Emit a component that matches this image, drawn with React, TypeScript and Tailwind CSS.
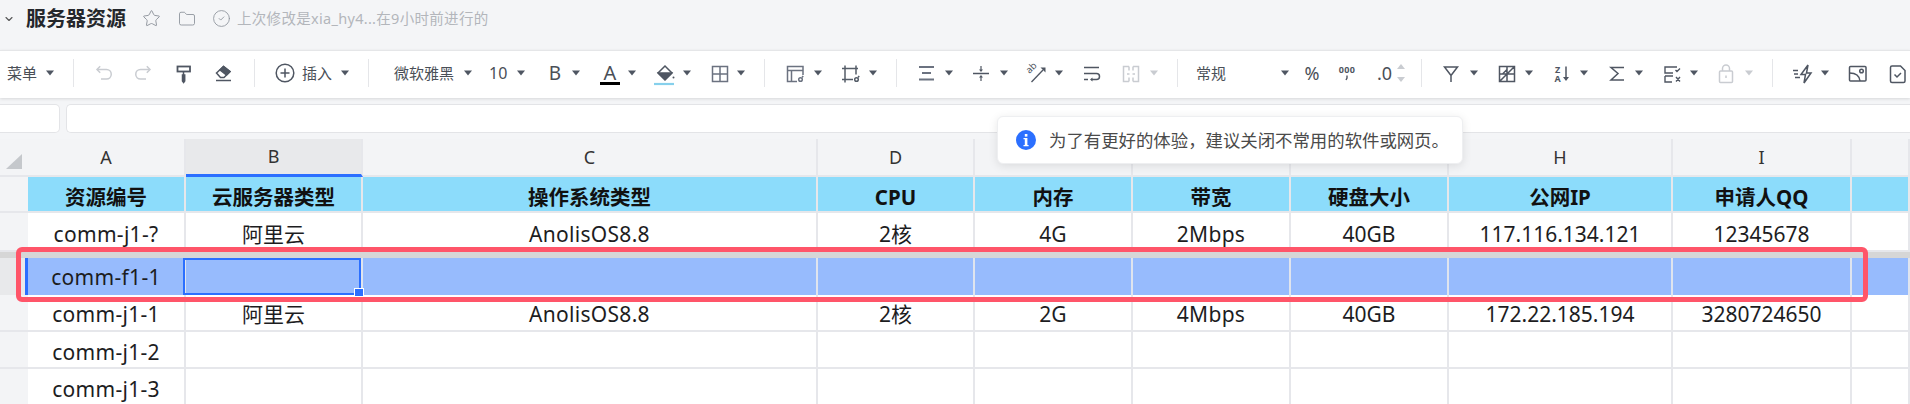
import React from "react";
import { Star, Folder, CircleCheck, ChevronDown } from "lucide-react";

const D = "#4f5662";
const G = "#c9ccd1";

function Caret({ cls = "", off = false }: { cls?: string; off?: boolean }) {
  return (
    <svg width="8" height="6" viewBox="0 0 8 6" className={`shrink-0 ${cls}`}>
      <path d="M0 .5h8L4 5.5z" fill={off ? G : D} />
    </svg>
  );
}

function Sep({ cls = "" }: { cls?: string }) {
  return <div className={`w-px h-[28px] shrink-0 bg-[#e5e6e9] ${cls}`} />;
}

function Ico({ cls = "", children, c = D, sw = 1.5 }: { cls?: string; children: React.ReactNode; c?: string; sw?: number }) {
  return (
    <svg width="20" height="20" viewBox="0 0 20 20" fill="none" stroke={c} strokeWidth={sw} className={`shrink-0 overflow-visible ${cls}`}>
      {children}
    </svg>
  );
}

function T({ cls = "", children }: { cls?: string; children: React.ReactNode }) {
  return <span className={`shrink-0 text-center text-[#4a4f57] leading-none ${cls}`}>{children}</span>;
}

const cols = "grid grid-cols-[28px_158px_177px_455px_157px_158px_158px_158px_224px_179px_58px]";
const line = "border-r-2 border-b-2 border-[#e6e7eb]";
const head = ["资源编号", "云服务器类型", "操作系统类型", "CPU", "内存", "带宽", "硬盘大小", "公网IP", "申请人QQ", ""];
const letters = ["A", "B", "C", "D", "", "", "", "H", "I", ""];
const track = ["tracking-[0.3px]", "", "tracking-[0.3px]", "", "", "tracking-[0.3px]", "", "", "", ""];

function DataRow({ h, vals, pad = "pt-[3px]" }: { h: string; vals: string[]; pad?: string }) {
  return (
    <div className={`${cols} ${h}`}>
      <div className="bg-[#f3f4f6] border-b-2 border-[#e6e7eb]" />
      {vals.map((v, i) => (
        <div key={i} className={`${line} bg-white flex items-center justify-center text-[21px] leading-[26px] text-[#1d1d1f] ${pad} ${track[i]}`}>
          {v}
        </div>
      ))}
    </div>
  );
}

export default function App() {
  return (
    <div className="relative w-[1910px] h-[404px] overflow-hidden bg-[#f4f5f7] font-['Noto_Sans','Noto_Sans_CJK_SC',sans-serif]">
      {/* title bar */}
      <div className="h-[50px] flex items-start pt-[9px]">
        <div className="flex items-center h-[19px]">
          <ChevronDown size={12} strokeWidth={2.2} color="#555" className="ml-[3px]" />
          <span className="ml-[11px] w-[100px] text-[20px] font-bold leading-none text-[#24272c]">服务器资源</span>
          <Star size={19} strokeWidth={1.2} color="#8f959d" className="ml-[16px]" />
          <Folder size={18} strokeWidth={1.2} color="#8f959d" className="ml-[17px]" />
          <CircleCheck size={19} strokeWidth={1.1} color="#8f959d" className="ml-[16px]" />
          <span className="ml-[6px] text-[14.5px] leading-none whitespace-nowrap text-[#b3b6bb] tracking-[0.3px]">上次修改是xia_hy4...在9小时前进行的</span>
        </div>
      </div>

      {/* toolbar */}
      <div className="h-[48px] bg-white border-t border-[#e5e6e8] shadow-[0_1px_3px_rgba(0,0,0,0.12)] flex items-center pb-[3px] relative text-[15px]">
        <T cls="ml-[7px] w-[30px]">菜单</T>
        <Caret cls="ml-[9px]" />
        <Sep cls="ml-[19px]" />
        <Ico cls="ml-[20px]" c={G}><path d="M3 6.500h9.500a4.700 4.700 0 0 1 0 9.500H7" /><path d="M6.200 3.300 3 6.500l3.200 3.200" /></Ico>
        <Ico cls="ml-[19px]" c={G}><path d="M17 6.500H7.500a4.700 4.700 0 0 0 0 9.500H13" /><path d="M13.800 3.300 17 6.500l-3.200 3.200" /></Ico>
        <Ico cls="ml-[20px]"><rect x="4.500" y="3.500" width="12.500" height="5" strokeWidth="1.800" /><path d="M10.500 8.500v3.500" /><path d="M9.500 12h2.200v6l-1.100 1.500-1.100-1.500z" fill={D} /></Ico>
        <Ico cls="ml-[20px]"><path d="M3.500 10 10.500 3.500l6.500 5-6 6H7.500z" /><path d="M7 7l3.500-3.500 6.500 5-3.500 3.500z" fill={D} /><path d="M3 17.500h15" /></Ico>
        <Sep cls="ml-[21px]" />
        <Ico cls="ml-[20px]"><circle cx="10" cy="10" r="8.800" /><path d="M10 5.500v9M5.500 10h9" /></Ico>
        <T cls="ml-[7px] w-[30px]">插入</T>
        <Caret cls="ml-[9px]" />
        <Sep cls="ml-[19px]" />
        <T cls="ml-[25px] w-[60px]">微软雅黑</T>
        <Caret cls="ml-[10px]" />
        <T cls="ml-[17px] w-[16px] text-[16px]">10</T>
        <Caret cls="ml-[12px]" />
        <T cls="ml-[20px] w-[20px] text-[19px]">B</T>
        <Caret cls="ml-[7px]" />
        <div className="ml-[20px] w-[20px] shrink-0 flex flex-col items-center pt-[3px]">
          <span className="text-[20px] leading-[18px] text-[#4a4f57]">A</span>
          <div className="w-[20px] h-[3px] bg-black" />
        </div>
        <Caret cls="ml-[8px]" />
        <Ico cls="ml-[19px]"><path d="M10 3 3 10l7 7 7-7z" /><path d="M3.500 10h13L10 16.500z" fill={D} /><circle cx="18.500" cy="14.500" r="1" fill={D} stroke="none" /><path d="M-1 21h20" stroke="#86d0ec" strokeWidth="2.200" /></Ico>
        <Caret cls="ml-[8px]" />
        <Ico cls="ml-[19px]" c="#6b7280"><path d="M2.500 3.500h15v15h-15zM10 3.500v15M2.500 11h15" /></Ico>
        <Caret cls="ml-[7px]" />
        <Sep cls="ml-[19px]" />
        <Ico cls="ml-[20px]" c="#6b7280"><path d="M18 12V3.500H2.500v15H12M2.500 7.500H18M6.500 7.500v11" /><circle cx="15.500" cy="16.500" r="1.800" /><path d="m17 14.500 1.200-1.500" /></Ico>
        <Caret cls="ml-[9px]" />
        <Ico cls="ml-[19px]" c="#555d68"><path d="M4 2.500v17M1 5.500h16M15 2.500v9M1 16.500h11" /><circle cx="15.500" cy="16.500" r="1.800" /><path d="m17 14.500 1.200-1.500" /></Ico>
        <Caret cls="ml-[8px]" />
        <Sep cls="ml-[19px]" />
        <Ico cls="ml-[20px]" c="#6b7280" sw={2}><path d="M2 4h15M5 10h9M2 16.500h15" /></Ico>
        <Caret cls="ml-[8px]" />
        <Ico cls="ml-[18px]"><path d="M2 10.500h16" /><path d="M10 3v4M10 18v-4" strokeWidth="1.200" /><path d="M8 6.500h4L10 9zM8 14.500h4L10 12z" fill={D} stroke="none" /></Ico>
        <Caret cls="ml-[9px]" />
        <Ico cls="ml-[18px]" sw={1.3}>
          <text x="0" y="0" transform="translate(3.500 11) rotate(-45)" fontSize="9.500" fill={D} stroke="none" fontFamily="Noto Sans">ab</text>
          <path d="M5.500 19 17 7" /><path d="M14.500 4.500h5v5z" fill={D} stroke="none" />
        </Ico>
        <Caret cls="ml-[9px]" />
        <Ico cls="ml-[19px]"><path d="M2 4.500h15M2 10.500h12.500a3 3 0 0 1 0 6H9.500M2 16.500h4" /><path d="M10.500 14.500 8 16.500l2.500 2z" fill={D} stroke="none" /></Ico>
        <Ico cls="ml-[19px]" c={G}><path d="M8 3.500H2.500v15H8M12 3.500h5.500v15H12M8 3.500v4M8 14.500v4M12 3.500v4M12 14.500v4M6 11h2.500M11.500 11H14" /></Ico>
        <Caret cls="ml-[9px]" off />
        <Sep cls="ml-[19px]" />
        <T cls="ml-[18px] w-[30px]">常规</T>
        <Caret cls="ml-[55px]" />
        <T cls="ml-[13px] w-[20px] text-[18px]">%</T>
        <Ico cls="ml-[15px]" sw={1.4}>
          <text x="10" y="9.500" textAnchor="middle" fontSize="9" fontWeight="700" letterSpacing="0.3" fill={D} stroke="none" fontFamily="Noto Sans">000</text>
          <path d="M10 12.500v2.500l-1 2" />
        </Ico>
        <T cls="ml-[20px] w-[14px] text-[18px]">.0</T>
        <div className="ml-[6px] w-[8px] shrink-0 flex flex-col items-center gap-[8px]">
          <svg width="8" height="5" viewBox="0 0 8 5"><path d="M4 0l4 5H0z" fill={G} /></svg>
          <svg width="8" height="5" viewBox="0 0 8 5"><path d="M4 5 8 0H0z" fill={G} /></svg>
        </div>
        <Sep cls="ml-[16px]" />
        <Ico cls="ml-[19px]"><path d="M3.500 4h13L10 12.500zM10 12.500v6.500" /></Ico>
        <Caret cls="ml-[9px]" />
        <Ico cls="ml-[19px]"><path d="M2.500 3.500h15v15h-15zM10 3.500v15M2.500 11h15M10 11l7.500-7.500M2.500 18.500 10 11M5.500 11 10 6.500" /></Ico>
        <Caret cls="ml-[8px]" />
        <Ico cls="ml-[19px]">
          <text x="5.500" y="9.500" textAnchor="middle" fontSize="9" fontWeight="700" fill={D} stroke="none" fontFamily="Noto Sans">Z</text>
          <text x="5.500" y="18.500" textAnchor="middle" fontSize="9" fontWeight="700" fill={D} stroke="none" fontFamily="Noto Sans">A</text>
          <path d="M14 3.500v13" /><path d="M11 14h6l-3 4z" fill={D} stroke="none" />
        </Ico>
        <Caret cls="ml-[8px]" />
        <Ico cls="ml-[19px]"><path d="M17 4.500H4l7 6-7 6.500h13" /></Ico>
        <Caret cls="ml-[8px]" />
        <Ico cls="ml-[19px]" sw={1.4}><path d="M15 4H3v6h8M3 13h8M3 13v6h7M13.500 7l1.500 1.500 3-3M14 14l4 4.500M18 14l-4 4.500" /></Ico>
        <Caret cls="ml-[8px]" />
        <Ico cls="ml-[18px]" c={G}><rect x="3.500" y="8" width="13" height="11.500" rx="1" /><path d="M6.500 8V5.500a3.500 3.500 0 0 1 7 0V8M10 12.500v2.500" /></Ico>
        <Caret cls="ml-[9px]" off />
        <Sep cls="ml-[19px]" />
        <Ico cls="ml-[20px]"><path d="M15 2 8 11.500h4.500L11 20l7-10h-4.500zM0 7.500h5M1 11h4M2 14.500h5" /></Ico>
        <Caret cls="ml-[8px]" />
        <Ico cls="ml-[19px]"><rect x="1.500" y="3.500" width="16.500" height="14.500" rx="1" /><circle cx="13.500" cy="8" r="1.800" /><path d="M1.500 10c6 0 10 3 10.500 8" /></Ico>
        <Ico cls="ml-[19px]"><path d="M5 3h8.500L18 7.500V18a1.500 1.500 0 0 1-1.500 1.500H5A1.500 1.500 0 0 1 3.500 18V4.500A1.500 1.500 0 0 1 5 3z" /><path d="m7.500 11.500 2.500 2.500 4-4" /></Ico>
      </div>

      {/* formula bar */}
      <div className="h-[41px] flex items-start pt-[6px] gap-[6px] pb-[6px]">
        <div className="w-[60px] h-[29px] shrink-0 bg-white border border-[#e3e4e7] border-l-0 rounded-r-[5px]" />
        <div className="flex-1 h-[29px] bg-white border border-[#e3e4e7] border-r-0 rounded-l-[5px]" />
      </div>

      {/* sheet */}
      <div className="text-[#333]">
        <div className={`${cols} h-[38px]`}>
          <div className="bg-[#f3f4f6] border-b-2 border-[#e6e7eb] flex items-end justify-start pl-[6px] pb-[6px]">
            <svg width="16" height="15" viewBox="0 0 16 15"><path d="M16 0v15H0z" fill="#c5c8cc" /></svg>
          </div>
          {letters.map((l, i) => (
            <div key={i} className={`flex items-center justify-center text-[18px] ${i === 1 ? "bg-[#e8e9eb] border-b-[3px] border-b-[#2b6fff] border-r-2 border-r-[#e6e7eb]" : "bg-[#f3f4f6] border-r-2 border-b-2 border-[#e6e7eb]"}`}>
              {l}
            </div>
          ))}
        </div>

        <div className={`${cols} h-[36px]`}>
          <div className="bg-[#f3f4f6] border-b-2 border-[#e6e7eb]" />
          {head.map((t, i) => (
            <div key={i} className={`${line} bg-[#8cdcfb] flex items-center justify-center text-[20.5px] leading-[26px] font-bold text-[#111] pt-[6px]`}>
              {t}
            </div>
          ))}
        </div>

        <DataRow h="h-[39px]" pad="pt-[4px]" vals={["comm-j1-?", "阿里云", "AnolisOS8.8", "2核", "4G", "2Mbps", "40GB", "117.116.134.121", "12345678", ""]} />

        <div className="h-[6px] bg-[#d6d6d6]" />

        <div className={`${cols} h-[37px]`}>
          <div className="bg-[#e8e9eb] border-r-[3px] border-[#2b6fff]" />
          <div className="bg-[#97bbfd] border-r-2 border-[#dfe4ee] flex items-center justify-center text-[21px] leading-[26px] tracking-[0.3px] text-[#1d1d1f]">comm-f1-1</div>
          <div className="relative bg-[#97bbfd] border-r-2 border-[#dfe4ee]">
            <div className="absolute -left-[3px] right-0 top-0 bottom-0 border-2 border-[#2b6fff]" />
            <div className="absolute -right-[3px] -bottom-[2px] w-[10px] h-[9px] bg-[#2b6fff] border border-white" />
          </div>
          {[0, 1, 2, 3, 4, 5, 6, 7].map((i) => (
            <div key={i} className="bg-[#97bbfd] border-r-2 border-[#dfe4ee]" />
          ))}
        </div>

        <DataRow h="h-[37px]" vals={["comm-j1-1", "阿里云", "AnolisOS8.8", "2核", "2G", "4Mbps", "40GB", "172.22.185.194", "3280724650", ""]} />
        <DataRow h="h-[37px]" pad="pt-[5px]" vals={["comm-j1-2", "", "", "", "", "", "", "", "", ""]} />
        <DataRow h="h-[37px]" pad="pt-[5px]" vals={["comm-j1-3", "", "", "", "", "", "", "", "", ""]} />
      </div>

      {/* overlays */}
      <div className="absolute left-[16px] top-[247px] w-[1852px] h-[55px] border-[5px] border-[#ff5569] rounded-[6px]" />
      <div className="absolute left-[997px] top-[116px] w-[466px] h-[48px] bg-white rounded-[6px] border border-[#eeeff1] shadow-[0_2px_10px_rgba(0,0,0,0.1)] flex items-center pl-[18px]">
        <svg width="20" height="20" viewBox="0 0 20 20" className="shrink-0">
          <circle cx="10" cy="10" r="10" fill="#2b6fff" />
          <rect x="8.800" y="4" width="2.600" height="2.600" fill="#fff" />
          <path d="M7.500 8h3.900v7h1.200v1.300H7.500V15h1.300V9.300H7.500z" fill="#fff" />
        </svg>
        <span className="ml-[13px] text-[17.4px] whitespace-nowrap text-[#4a4a4a]">为了有更好的体验，建议关闭不常用的软件或网页。</span>
      </div>
    </div>
  );
}
